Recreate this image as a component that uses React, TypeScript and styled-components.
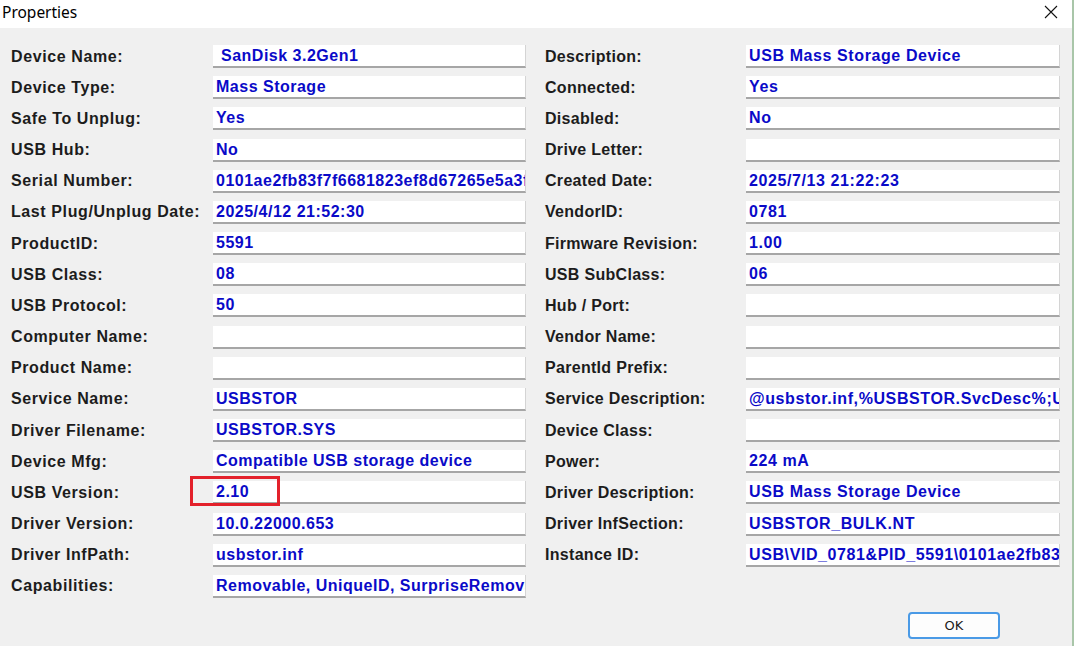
import React from "react";
import styled, { createGlobalStyle } from "styled-components";

const GlobalStyle = createGlobalStyle`
    html, body {
        margin: 0;
        padding: 0;
        width: 1074px;
        height: 646px;
        overflow: hidden;
        background: #f0f0f0;
    }
`;

type Item = { label: string; value: string; indent?: boolean; marked?: boolean };

const leftItems: Item[] = [
    { label: "Device Name:", value: "SanDisk 3.2Gen1", indent: true },
    { label: "Device Type:", value: "Mass Storage" },
    { label: "Safe To Unplug:", value: "Yes" },
    { label: "USB Hub:", value: "No" },
    { label: "Serial Number:", value: "0101ae2fb83f7f6681823ef8d67265e5a3f1c2b0" },
    { label: "Last Plug/Unplug Date:", value: "2025/4/12 21:52:30" },
    { label: "ProductID:", value: "5591" },
    { label: "USB Class:", value: "08" },
    { label: "USB Protocol:", value: "50" },
    { label: "Computer Name:", value: "" },
    { label: "Product Name:", value: "" },
    { label: "Service Name:", value: "USBSTOR" },
    { label: "Driver Filename:", value: "USBSTOR.SYS" },
    { label: "Device Mfg:", value: "Compatible USB storage device" },
    { label: "USB Version:", value: "2.10", marked: true },
    { label: "Driver Version:", value: "10.0.22000.653" },
    { label: "Driver InfPath:", value: "usbstor.inf" },
    { label: "Capabilities:", value: "Removable, UniqueID, SurpriseRemovalOK" },
];

const rightItems: Item[] = [
    { label: "Description:", value: "USB Mass Storage Device" },
    { label: "Connected:", value: "Yes" },
    { label: "Disabled:", value: "No" },
    { label: "Drive Letter:", value: "" },
    { label: "Created Date:", value: "2025/7/13 21:22:23" },
    { label: "VendorID:", value: "0781" },
    { label: "Firmware Revision:", value: "1.00" },
    { label: "USB SubClass:", value: "06" },
    { label: "Hub / Port:", value: "" },
    { label: "Vendor Name:", value: "" },
    { label: "ParentId Prefix:", value: "" },
    { label: "Service Description:", value: "@usbstor.inf,%USBSTOR.SvcDesc%;USB Mass Storage Driver" },
    { label: "Device Class:", value: "" },
    { label: "Power:", value: "224 mA" },
    { label: "Driver Description:", value: "USB Mass Storage Device" },
    { label: "Driver InfSection:", value: "USBSTOR_BULK.NT" },
    { label: "Instance ID:", value: "USB\\VID_0781&PID_5591\\0101ae2fb83f7f6681823ef8d67265e5a" },
];

export default function App() {
    return (
        <>
            <GlobalStyle />
            <Window>
                <TitleBar>
                    <Title>Properties</Title>
                    <CloseButton>
                        <svg width="14" height="14" viewBox="0 0 14 14">
                            <path d="M1 1 L13 13 M13 1 L1 13" stroke="#111" strokeWidth="1.1" fill="none" />
                        </svg>
                    </CloseButton>
                </TitleBar>
                <Body>
                    <Columns>
                        <Column>
                            {leftItems.map((item) => (
                                <Row key={item.label} $labelWidth={202} $fieldWidth={313}>
                                    <Label $spacing={0.6}>{item.label}</Label>
                                    <Field $indent={item.indent}>
                                        <Value $spacing={0.5}>{item.value}</Value>
                                        {item.marked && <Highlight />}
                                    </Field>
                                </Row>
                            ))}
                        </Column>
                        <Column>
                            {rightItems.map((item) => (
                                <Row key={item.label} $labelWidth={201} $fieldWidth={314}>
                                    <Label $spacing={0.3}>{item.label}</Label>
                                    <Field>
                                        <Value $spacing={0.6}>{item.value}</Value>
                                    </Field>
                                </Row>
                            ))}
                        </Column>
                    </Columns>
                    <Footer>
                        <OkButton>OK</OkButton>
                    </Footer>
                </Body>
            </Window>
        </>
    );
}

const Window = styled.div`
    width: 1072px;
    height: 646px;
    border-right: 2px solid #a9c6a9;
    display: flex;
    flex-direction: column;
    background: #f0f0f0;
`;

const TitleBar = styled.div`
    height: 28px;
    background: #ffffff;
    display: flex;
    align-items: center;
    justify-content: space-between;
    padding: 0 14px 0 2px;
`;

const Title = styled.div`
    font-family: "Noto Sans", "Open Sans", sans-serif;
    font-size: 15.5px;
    color: #000;
    margin-top: -4px;
`;

const CloseButton = styled.div`
    width: 14px;
    height: 14px;
    display: flex;
    margin-top: -4px;
`;

const Body = styled.div`
    flex: 1;
    padding: 17px 0 0 11px;
    display: flex;
    flex-direction: column;
`;

const Columns = styled.div`
    display: flex;
    gap: 19px;
`;

const Column = styled.div`
    display: flex;
    flex-direction: column;
    gap: 8.18px;
`;

const Row = styled.div<{ $labelWidth: number; $fieldWidth: number }>`
    display: grid;
    grid-template-columns: ${(p) => p.$labelWidth}px ${(p) => p.$fieldWidth}px;
    align-items: center;
    height: 23px;
`;

const Label = styled.div<{ $spacing: number }>`
    font-family: "Liberation Sans", Arial, sans-serif;
    font-weight: 700;
    font-size: 16px;
    letter-spacing: ${(p) => p.$spacing}px;
    color: #1c1c1c;
    white-space: nowrap;
`;

const Field = styled.div<{ $indent?: boolean }>`
    position: relative;
    height: 23px;
    box-sizing: border-box;
    background: #ffffff;
    border-bottom: 2px solid #a6a6a6;
    border-right: 1px solid #d4d4d4;
    padding-left: ${(p) => (p.$indent ? 8 : 3)}px;
    display: flex;
    align-items: center;
`;

const Value = styled.div<{ $spacing: number }>`
    font-family: "Liberation Sans", Arial, sans-serif;
    font-weight: 700;
    font-size: 16px;
    letter-spacing: ${(p) => p.$spacing}px;
    color: #0a0ac8;
    white-space: nowrap;
    overflow: hidden;
    min-width: 0;
    flex: 1;
    margin-top: 1px;
`;

const Highlight = styled.div`
    position: absolute;
    left: -23px;
    top: -5px;
    width: 90px;
    height: 30px;
    box-sizing: border-box;
    border: 3px solid #e3212b;
    pointer-events: none;
`;

const Footer = styled.div`
    display: flex;
    justify-content: flex-end;
    padding: 14px 72px 0 0;
`;

const OkButton = styled.button`
    width: 92px;
    height: 27px;
    box-sizing: border-box;
    border: 2px solid #4a9ae6;
    border-radius: 4px;
    background: #fdfdfd;
    font-family: "DejaVu Sans", "Liberation Sans", sans-serif;
    font-size: 13px;
    color: #1a1a1a;
    padding: 0;
`;
